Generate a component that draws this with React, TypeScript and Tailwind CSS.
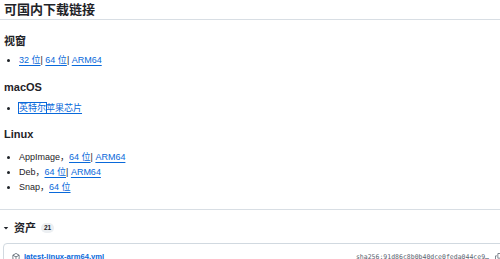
import React from 'react';

const sans = { fontFamily: '"Liberation Sans", Arial, "Noto Sans CJK SC", sans-serif' };
const mono = { fontFamily: '"DejaVu Sans Mono", "Liberation Mono", monospace' };

const A = ({ children }: { children: React.ReactNode }) => (
    <a href="#" className="text-[#0969da] underline underline-offset-[1.5px] decoration-[#0969da]">
        {children}
    </a>
);

const PackageIcon = () => (
    <svg viewBox="0 0 16 16" width={8} height={8} fill="#59636e">
        <path d="m8.878.392 5.25 3.045c.54.314.872.89.872 1.514v6.098a1.75 1.75 0 0 1-.872 1.514l-5.25 3.045a1.75 1.75 0 0 1-1.756 0l-5.25-3.045A1.75 1.75 0 0 1 1 11.049V4.951c0-.624.332-1.201.872-1.514L7.122.392a1.75 1.75 0 0 1 1.756 0ZM7.875 1.69l-4.63 2.685L8 7.133l4.755-2.758-4.63-2.685a.248.248 0 0 0-.25 0ZM2.5 5.677v5.372c0 .09.047.171.125.216l4.625 2.683V8.432Zm6.25 8.271 4.625-2.683a.25.25 0 0 0 .125-.216V5.677L8.75 8.432Z" />
    </svg>
);

const CopyIcon = () => (
    <svg viewBox="0 0 16 16" width={8} height={8} fill="#59636e">
        <path d="M0 6.75C0 5.784.784 5 1.75 5h1.5a.75.75 0 0 1 0 1.5h-1.5a.25.25 0 0 0-.25.25v7.5c0 .138.112.25.25.25h7.5a.25.25 0 0 0 .25-.25v-1.5a.75.75 0 0 1 1.5 0v1.5A1.75 1.75 0 0 1 9.25 16h-7.5A1.75 1.75 0 0 1 0 14.25Z" />
        <path d="M5 1.75C5 .784 5.784 0 6.75 0h7.5C15.216 0 16 .784 16 1.75v7.5A1.75 1.75 0 0 1 14.25 11h-7.5A1.75 1.75 0 0 1 5 9.25Zm1.75-.25a.25.25 0 0 0-.25.25v7.5c0 .138.112.25.25.25h7.5a.25.25 0 0 0 .25-.25v-7.5a.25.25 0 0 0-.25-.25Z" />
    </svg>
);

export default function App() {
    return (
        <div className="w-[500px] h-[259px] overflow-hidden bg-white text-[#1f2328]" style={sans}>
            <h2 className="pl-[4px] pt-[2px] pb-[1px] text-[13px] leading-[16px] font-bold border-b border-[#d8dee4]">
                可国内下载链接
            </h2>

            <div className="pl-[4px]">
                <h3 className="mt-[14px] text-[11px] leading-[14px] font-bold">视窗</h3>
                <ul className="mt-[6px] list-disc pl-[15px] text-[9px] leading-[13px]">
                    <li>
                        <A>32 位</A>| <A>64 位</A>| <A>ARM64</A>
                    </li>
                </ul>

                <h3 className="mt-[13px] text-[11px] leading-[14px] font-bold">macOS</h3>
                <ul className="mt-[8px] list-disc pl-[15px] text-[9px] leading-[13px]">
                    <li>
                        <span className="outline outline-[1.5px] outline-[#0969da]">
                            <A>英特尔</A>
                        </span>
                        <A>苹果芯片</A>
                    </li>
                </ul>

                <h3 className="mt-[12px] text-[11px] leading-[14px] font-bold">Linux</h3>
                <ul className="mt-[10px] list-disc pl-[15px] text-[9px] leading-[13px] flex flex-col gap-[2px]">
                    <li>
                        AppImage，<A>64 位</A>| <A>ARM64</A>
                    </li>
                    <li>
                        Deb，<A>64 位</A>| <A>ARM64</A>
                    </li>
                    <li>
                        Snap，<A>64 位</A>
                    </li>
                </ul>
            </div>

            <div className="mt-[15px] border-t border-[#d8dee4]" />

            <div className="pl-[3px] mt-[11px] flex items-center gap-[5px] h-[14px]">
                <svg viewBox="0 0 16 16" width={6} height={6} fill="#1f2328">
                    <path d="M2 5h12l-6 7z" />
                </svg>
                <span className="text-[11px] leading-[14px] font-bold">资产</span>
                <span className="rounded-full bg-[#eceff2] px-[3px] text-[6.5px] leading-[10px] font-bold">21</span>
            </div>

            <div className="ml-[3px] mr-[-20px] mt-[8px] border border-[#d1d9e0] rounded-[4px] h-[40px] px-[8px] pt-[8px] flex items-start">
                <div className="flex items-center gap-[4px]">
                    <PackageIcon />
                    <a href="#" className="text-[#0969da] text-[7.6px] font-bold leading-[10px]">latest-linux-arm64.yml</a>
                </div>
                <div className="ml-auto mr-[8px] flex items-center gap-[6px]">
                    <span className="text-[6.5px] leading-[10px] text-[#59636e]" style={mono}>
                        sha256:91d86c8b0b40dce0feda044ce9…
                    </span>
                    <CopyIcon />
                </div>
            </div>
        </div>
    );
}
